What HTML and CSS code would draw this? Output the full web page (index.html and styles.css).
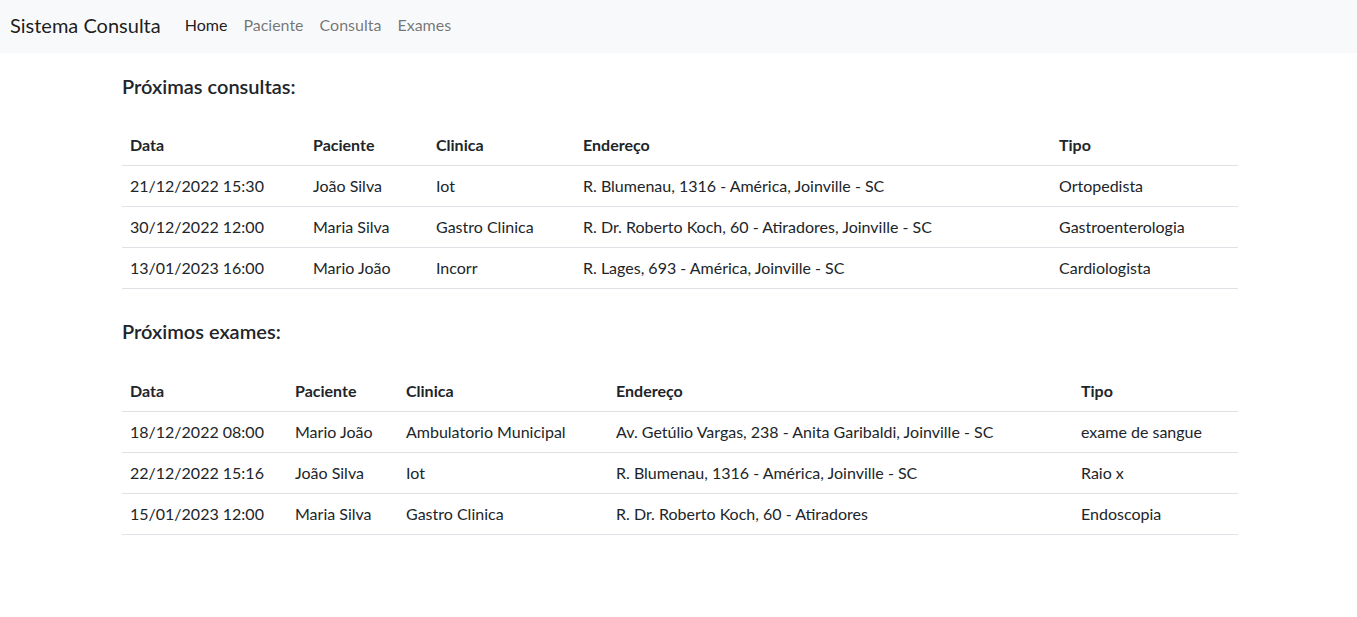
FILE: index.html
```html
<!DOCTYPE html>
<html lang="pt-BR">
<head>
<meta charset="utf-8">
<title>Sistema Consulta</title>
<link rel="stylesheet" href="styles.css">
</head>
<body>
<nav class="navbar">
  <a class="brand" href="#">Sistema Consulta</a>
  <ul class="nav">
    <li><a class="nav-link active" href="#">Home</a></li>
    <li><a class="nav-link" href="#">Paciente</a></li>
    <li><a class="nav-link" href="#">Consulta</a></li>
    <li><a class="nav-link" href="#">Exames</a></li>
  </ul>
</nav>
<main class="container">
  <h5 class="section-title first">Próximas consultas:</h5>
  <table class="table">
    <colgroup>
      <col class="c1-data"><col class="c1-pac"><col class="c1-cli"><col class="c1-end"><col class="c1-tipo">
    </colgroup>
    <thead>
      <tr><th>Data</th><th>Paciente</th><th>Clinica</th><th>Endereço</th><th>Tipo</th></tr>
    </thead>
    <tbody>
      <tr><td>21/12/2022 15:30</td><td>João Silva</td><td>Iot</td><td>R. Blumenau, 1316 - América, Joinville - SC</td><td>Ortopedista</td></tr>
      <tr><td>30/12/2022 12:00</td><td>Maria Silva</td><td>Gastro Clinica</td><td>R. Dr. Roberto Koch, 60 - Atiradores, Joinville - SC</td><td>Gastroenterologia</td></tr>
      <tr><td>13/01/2023 16:00</td><td>Mario João</td><td>Incorr</td><td>R. Lages, 693 - América, Joinville - SC</td><td>Cardiologista</td></tr>
    </tbody>
  </table>
  <h5 class="section-title second">Próximos exames:</h5>
  <table class="table">
    <colgroup>
      <col class="c2-data"><col class="c2-pac"><col class="c2-cli"><col class="c2-end"><col class="c2-tipo">
    </colgroup>
    <thead>
      <tr><th>Data</th><th>Paciente</th><th>Clinica</th><th>Endereço</th><th>Tipo</th></tr>
    </thead>
    <tbody>
      <tr><td>18/12/2022 08:00</td><td>Mario João</td><td>Ambulatorio Municipal</td><td>Av. Getúlio Vargas, 238 - Anita Garibaldi, Joinville - SC</td><td>exame de sangue</td></tr>
      <tr><td>22/12/2022 15:16</td><td>João Silva</td><td>Iot</td><td>R. Blumenau, 1316 - América, Joinville - SC</td><td>Raio x</td></tr>
      <tr><td>15/01/2023 12:00</td><td>Maria Silva</td><td>Gastro Clinica</td><td>R. Dr. Roberto Koch, 60 - Atiradores</td><td>Endoscopia</td></tr>
    </tbody>
  </table>
</main>
</body>
</html>
```
FILE: styles.css
```css
* { box-sizing: border-box; }
body {
  margin: 0;
  font-family: Lato, "Noto Sans", "Liberation Sans", sans-serif;
  font-size: 16px;
  line-height: 24px;
  color: #212529;
  background: #fff;
}
a { text-decoration: none; }

.navbar {
  display: flex;
  align-items: center;
  height: 53px;
  padding: 0 10px 4px;
  background: #f8f9fa;
}
.brand {
  font-size: 20px;
  line-height: 30px;
  color: rgba(0,0,0,.9);
  margin-right: 16px;
}
.nav {
  display: flex;
  list-style: none;
  margin: 0;
  padding: 0;
}
.nav-link {
  display: block;
  padding: 8px 8px;
  color: rgba(0,0,0,.55);
}
.nav-link.active { color: rgba(0,0,0,.9); }

.container {
  width: 1116px;
  margin-left: 122px;
}
.section-title {
  margin: 31px 0 26px;
  font-size: 20px;
  line-height: 24px;
  font-weight: 600;
}
.section-title.first { margin-top: 21px; margin-bottom: 27px; }
.section-title.second { margin-top: 30px; margin-bottom: 28px; }

.table {
  width: 100%;
  table-layout: fixed;
  border-collapse: collapse;
}
.table th,
.table td {
  padding: 8px;
  text-align: left;
  border-bottom: 1px solid #dee2e6;
  white-space: nowrap;
}
.table th { font-weight: 700; }

.c1-data { width: 183px; }
.c1-pac { width: 123px; }
.c1-cli { width: 147px; }
.c1-end { width: 476px; }
.c1-tipo { width: 187px; }

.c2-data { width: 165px; }
.c2-pac { width: 111px; }
.c2-cli { width: 210px; }
.c2-end { width: 465px; }
.c2-tipo { width: 165px; }
```
